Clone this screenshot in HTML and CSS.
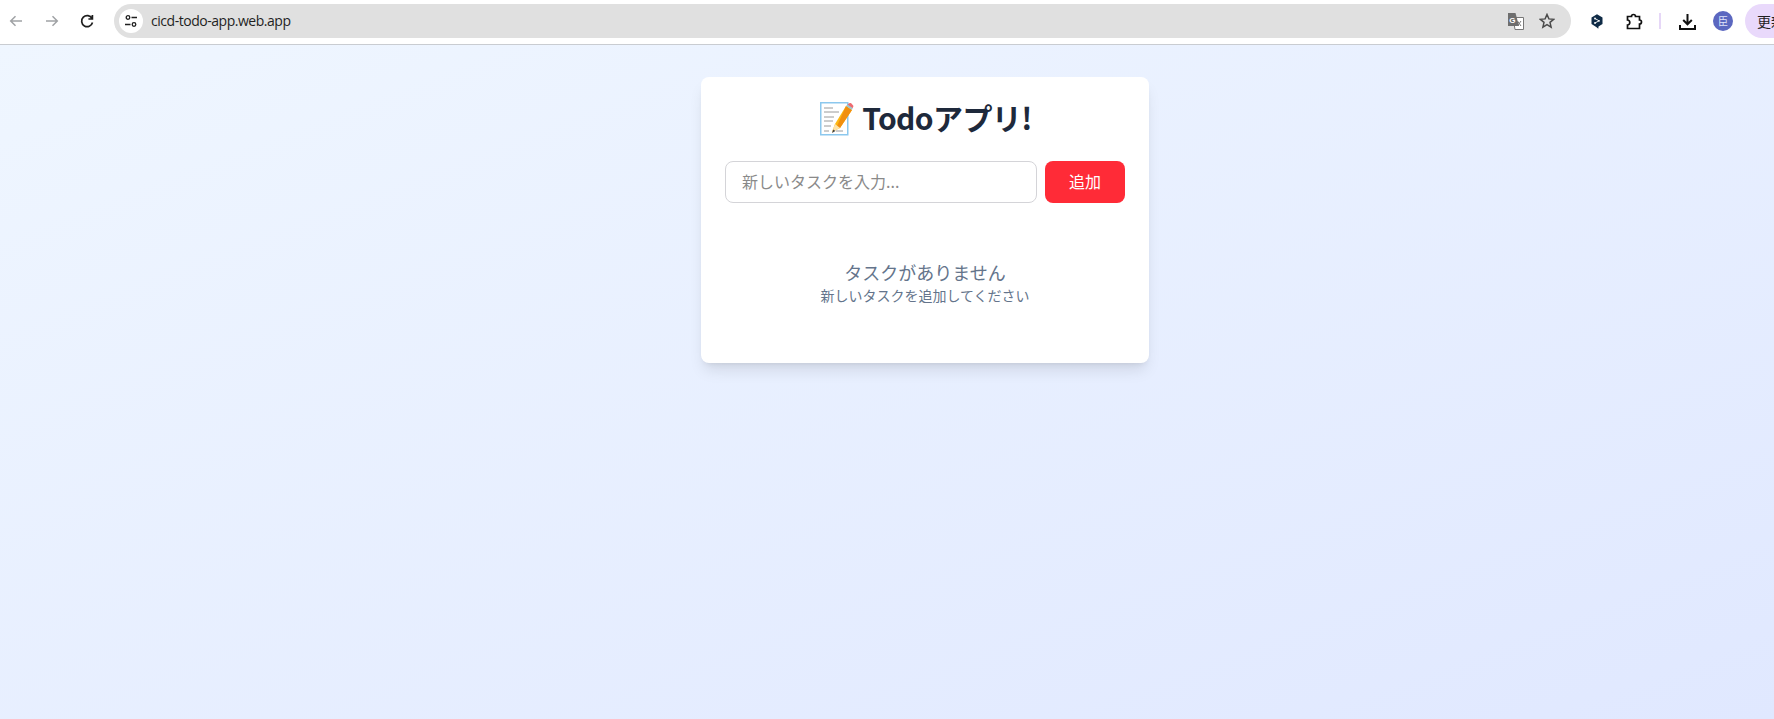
FILE: index.html
```html
<!DOCTYPE html>
<html lang="ja">
<head>
<meta charset="utf-8">
<title>Todoアプリ</title>
<link rel="stylesheet" href="styles.css">
</head>
<body>
<header class="chrome">
  <div class="nav">
    <svg class="ico dim" viewBox="0 0 16 16"><path d="M14 8H3M7.500 3.200 2.700 8l4.800 4.800"/></svg>
    <svg class="ico dim fwd" viewBox="0 0 16 16"><path d="M2 8h11M8.500 3.200 13.300 8l-4.800 4.800"/></svg>
    <svg class="ico dark" viewBox="0 0 16 16"><path d="M13 5.500A5.500 5.500 0 1 0 13.500 9.500M13.400 2v4h-4"/></svg>
  </div>
  <div class="omnibox">
    <span class="tune"><svg viewBox="0 0 16 16"><circle cx="5" cy="4.500" r="1.800"/><path d="M8.500 4.500H14M2 11.500h5.500"/><circle cx="11" cy="11.500" r="1.800"/></svg></span>
    <span class="url">cicd-todo-app.web.app</span>
    <span class="omni-right">
      <svg class="translate" viewBox="0 0 17 17"><path class="t-back" d="M6 4.500h10.500v12H8z"/><path class="t-front" d="M1 0h7.500l3.500 13H1z"/><text class="t-g" x="2.200" y="10">G</text><path class="t-x" d="M10.500 8l3.500 5M14 8l-3.500 5"/></svg>
      <svg class="star" viewBox="0 0 16 16"><path d="M8 1.500l1.900 4.400 4.800.4-3.700 3.100 1.100 4.700L8 11.700l-4.100 2.400L5 9.400 1.300 6.300l4.800-.4z"/></svg>
    </span>
  </div>
  <div class="tools">
    <svg class="deepl" viewBox="0 0 12 15"><path d="M6 .3l5.500 3.200v6.600L7.500 12.400 7.300 14.700 5.200 13 .5 10.100V3.500z"/><circle class="deepl-dot" cx="4" cy="4.500" r=".9"/><circle class="deepl-dot" cx="4" cy="9" r=".9"/><circle class="deepl-dot" cx="8" cy="6.800" r=".9"/><path class="deepl-mark" d="M4 4.500l4 2.300L4 9"/></svg>
    <svg class="puzzle" viewBox="0 0 17 17"><path d="M1.500 3.500h4a2 2 0 0 1 4 0h4v3.500a2 2 0 0 1 0 4v4.500h-12v-3.500c1.500 0 2.300-1.100 2.300-2.500S3 7 1.500 7z"/></svg>
    <span class="sep"></span>
    <svg class="download" viewBox="0 0 17 17"><path d="M8.500 1v10M4.200 7 8.500 11.300 12.800 7M1 12v4h15v-4"/></svg>
    <span class="avatar">臣</span>
    <span class="update">更新</span>
  </div>
</header>
<main class="page">
  <section class="card">
    <h1 class="title">
      <svg class="memo" viewBox="0 0 34 34"><rect x=".75" y=".75" width="27" height="32" fill="#fff" stroke="#8cc8ee" stroke-width="1.500"/><path d="M4 6h9M4 10h15M4 15h10M4 19h9M4 24h7M4 29h5M16 29h7" stroke="#9a9a9a" stroke-width="1"/><path d="M12 30l3-8L26 4l6 4-12 18z" fill="#fdb813"/><path d="M26 4l6 4-12 18-3-2z" fill="#f18f0f"/><path d="M27.500 3l5 3.400 1-2.400-2.500-3-2.200.2z" fill="#ef6a70"/><path d="M26 4l1.500-1.500 5 3.500L32 8z" fill="#9fc5c9"/><path d="M12 30l3-8 5 4z" fill="#fde3a8"/><path d="M12 31l1.200-3.500 2.300 1.600z" fill="#444"/></svg>
      <span class="title-text">Todoアプリ!</span>
    </h1>
    <form class="entry">
      <input class="field" type="text" placeholder="新しいタスクを入力...">
      <button class="add" type="button">追加</button>
    </form>
    <div class="empty">
      <p class="empty-main">タスクがありません</p>
      <p class="empty-sub">新しいタスクを追加してください</p>
    </div>
  </section>
</main>
</body>
</html>
```
FILE: styles.css
```css
* { box-sizing: border-box; }
html, body { margin: 0; height: 100%; }
body {
  width: 1774px;
  height: 719px;
  overflow: hidden;
  display: flex;
  flex-direction: column;
  font-family: "Noto Sans CJK JP", "Noto Sans", sans-serif;
}
.chrome {
  height: 45px;
  flex: none;
  background: #fff;
  border-bottom: 1px solid #c9ccd1;
  display: flex;
  align-items: flex-start;
  padding-top: 4px;
}
.nav {
  width: 114px;
  height: 34px;
  display: flex;
  align-items: center;
  padding-left: 8px;
  gap: 20px;
  flex: none;
}
.ico { width: 16px; height: 16px; fill: none; stroke-width: 1.500; flex: none; }
.ico.dim { stroke: #a0a2a5; }
.ico.dark { stroke: #1f1f1f; stroke-width: 1.700; margin-left: -1px; }
.omnibox {
  width: 1457px;
  height: 34px;
  flex: none;
  background: #e0e0e0;
  border-radius: 17px;
  display: flex;
  align-items: center;
  padding-left: 5px;
}
.tune {
  width: 24px;
  height: 24px;
  border-radius: 50%;
  background: #fff;
  display: flex;
  align-items: center;
  justify-content: center;
}
.tune svg { width: 16px; height: 16px; fill: none; stroke: #1f1f1f; stroke-width: 1.300; }
.url {
  margin-left: 8px;
  font: 14px/34px "Open Sans", sans-serif;
  letter-spacing: -0.47px;
  color: #1f1f1f;
}
.omni-right {
  margin-left: auto;
  margin-right: 16px;
  display: flex;
  align-items: center;
  gap: 15px;
}
.translate { width: 17px; height: 17px; }
.t-back { fill: #fff; stroke: #777; stroke-width: 1; }
.t-front { fill: #6e6e6e; }
.t-g { font: bold 8px "Liberation Sans", sans-serif; fill: #fff; }
.t-x { fill: none; stroke: #777; stroke-width: 1; }
.star { width: 16px; height: 16px; fill: none; stroke: #4a4a4a; stroke-width: 1.500; }
.tools {
  flex: 1;
  height: 34px;
  display: flex;
  align-items: center;
  padding-left: 20px;
  min-width: 0;
  overflow: hidden;
}
.deepl { width: 12px; height: 15px; fill: #0f2b46; flex: none; }
.deepl-dot { fill: #fff; }
.deepl-mark { fill: none; stroke: #fff; stroke-width: .9; }
.puzzle { width: 17px; height: 17px; margin-left: 23px; fill: none; stroke: #111; stroke-width: 1.700; flex: none; }
.sep { width: 2px; height: 16px; margin-left: 16px; background: #e6d7f7; flex: none; }
.download { width: 17px; height: 17px; margin-left: 18px; fill: none; stroke: #111; stroke-width: 2; flex: none; }
.avatar {
  width: 20px;
  height: 20px;
  margin-left: 17px;
  border-radius: 50%;
  background: #5b67c0;
  color: #dfe3fa;
  font-size: 10px;
  line-height: 20px;
  text-align: center;
  flex: none;
}
.update {
  width: 70px;
  height: 34px;
  margin-left: 12px;
  padding-left: 12px;
  border-radius: 17px 0 0 17px;
  background: #e9d9fb;
  font-size: 14px;
  line-height: 34px;
  color: #1f1f1f;
  flex: none;
  white-space: nowrap;
}
.page {
  flex: 1;
  background: linear-gradient(to bottom right, #eff6ff 0%, #e0e8ff 100%);
  padding: 32px 0 0 76px;
  display: flex;
  justify-content: center;
  align-items: flex-start;
}
.card {
  width: 448px;
  height: 286px;
  background: #fff;
  border-radius: 8px;
  padding: 24px;
  box-shadow: 0 10px 15px -3px rgba(0, 0, 0, .1), 0 4px 6px -4px rgba(0, 0, 0, .1);
}
.title {
  margin: 0 0 24px;
  height: 36px;
  padding-left: 2px;
  display: flex;
  align-items: center;
  justify-content: center;
  gap: 8px;
  font-size: 30px;
  line-height: 36px;
  font-weight: 700;
  color: #1e293b;
}
.title-text { letter-spacing: -0.6px; padding-bottom: 4px; }
.memo { width: 34px; height: 34px; flex: none; }
.entry { display: flex; gap: 8px; }
.field {
  width: 312px;
  height: 42px;
  padding: 0 16px 2px;
  border: 1px solid #d4d4d8;
  border-radius: 8px;
  font: 16px "Noto Sans CJK JP", sans-serif;
  color: #1e293b;
  outline: none;
}
.field::placeholder { color: #8a8a8a; opacity: 1; }
.add {
  width: 80px;
  height: 42px;
  padding: 0 0 2px;
  border: 0;
  border-radius: 8px;
  background: #ff2b37;
  color: #fff;
  font: 16px "Noto Sans CJK JP", sans-serif;
}
.empty { margin-top: 56px; text-align: center; color: #64748b; }
.empty-main { margin: 0; font-size: 18px; line-height: 26px; }
.empty-sub { margin: 0; font-size: 14px; line-height: 20px; }
```
